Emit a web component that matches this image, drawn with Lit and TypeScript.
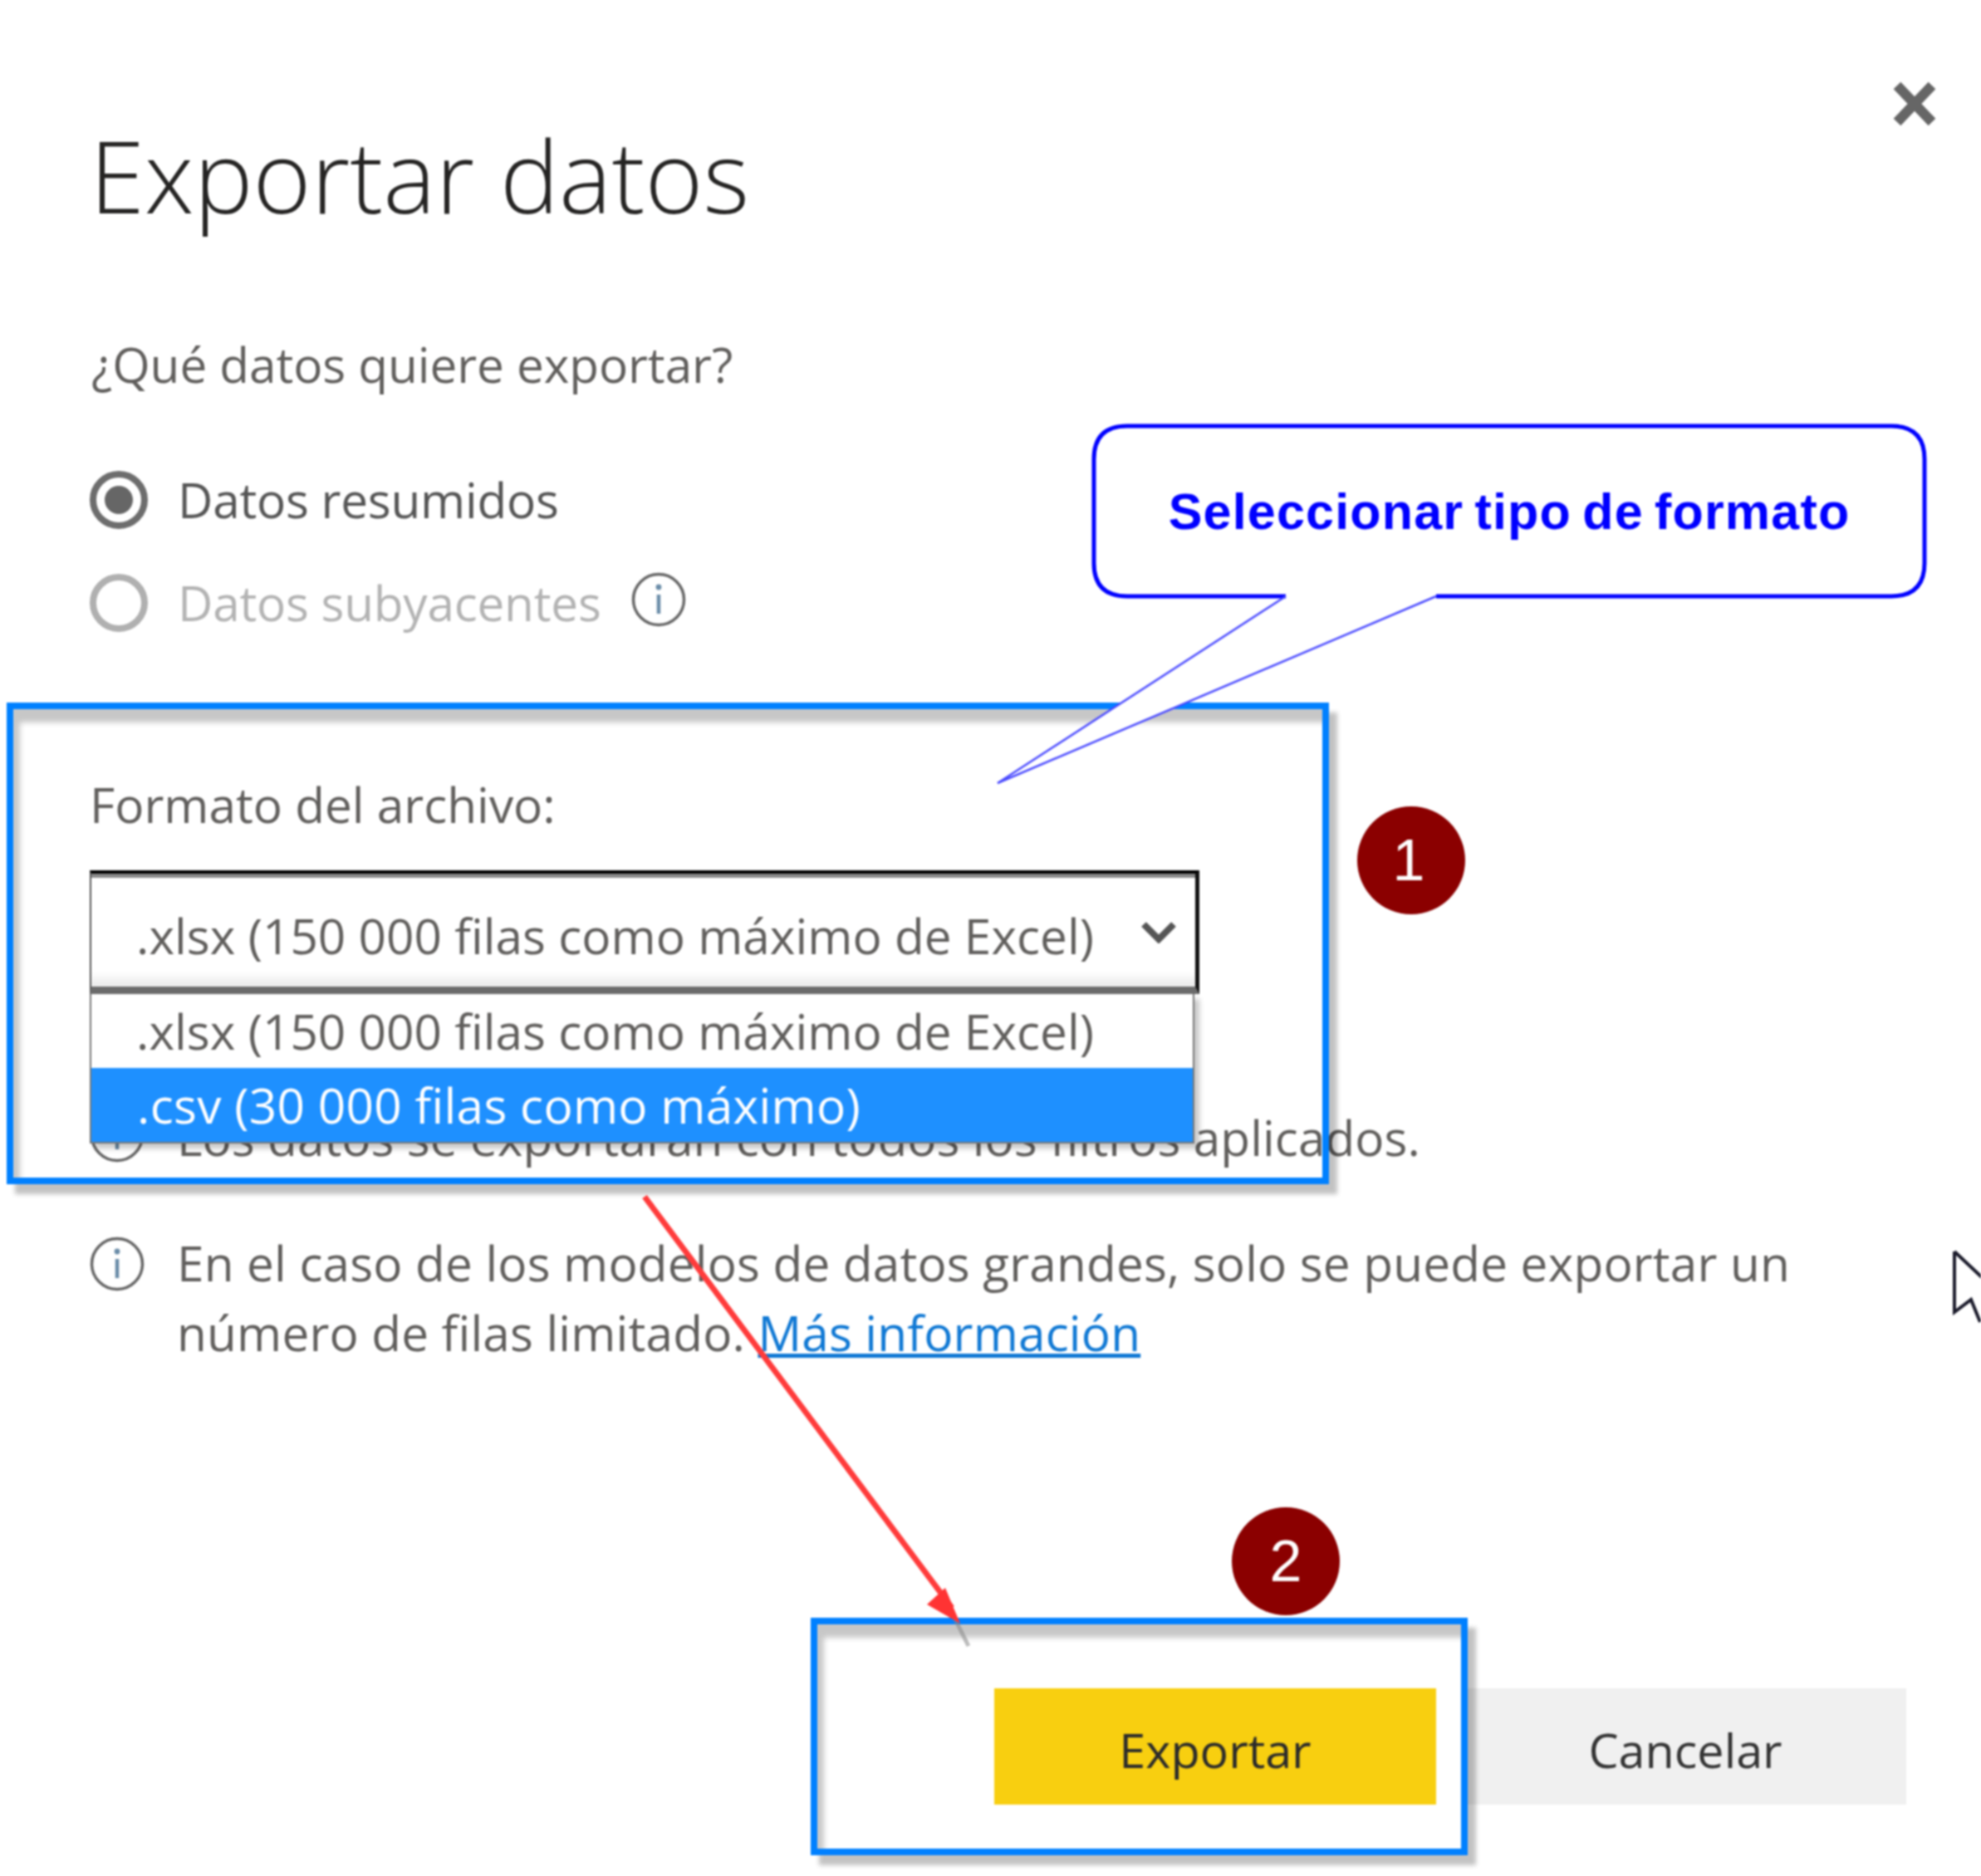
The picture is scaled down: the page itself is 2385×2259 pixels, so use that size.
import { LitElement, html, css, svg } from "lit";
import { customElement } from "lit/decorators.js";

const infoIcon = (size: number) => html`<svg class="info" width=${size} height=${size} viewBox="0 0 66 66" aria-hidden="true">
  <circle cx="33" cy="33" r="30.5" fill="none" stroke="#666" stroke-width="3.5"/>
  <circle cx="33" cy="18" r="3.4" fill="#6a8ca8"/>
  <path d="M33 27V50" stroke="#6a8ca8" stroke-width="4.5" fill="none"/>
</svg>`;

@customElement("app-root")
export class AppRoot extends LitElement {
  static styles = css`
    :host {
      display: block;
      position: relative;
      width: 2385px;
      height: 2259px;
      overflow: hidden;
      background: #fff;
      font-family: "Open Sans", "Noto Sans", sans-serif;
      color: #605e5c;
      font-size: 58.5px;
      filter: blur(0.8px);
    }
    .dialog {
      display: flex;
      flex-direction: column;
      padding: 0 90px 0 108px;
      height: 2259px;
      box-sizing: border-box;
    }
    .head {
      display: flex;
      justify-content: space-between;
      height: 293px;
      padding-top: 131px;
      box-sizing: border-box;
    }
    h1 {
      margin: 0;
      font-size: 119.5px;
      line-height: 160px;
      font-weight: 300;
      color: #252423;
      white-space: nowrap;
    }
    .close {
      margin: -34px -37px 0 0;
      width: 54px;
      height: 56px;
    }
    .line {
      height: 70px;
      line-height: 70px;
      white-space: nowrap;
    }
    .q { margin-top: 110px; padding-left: 2px; letter-spacing: -0.08px; }
    .radio {
      display: flex;
      align-items: center;
      gap: 36px;
      height: 70px;
      color: #555;
      white-space: nowrap;
      letter-spacing: -0.25px;
    }
    .r1 { margin-top: 93px; }
    .r2 { margin-top: 54px; color: #b3b3b3; }
    .dot {
      width: 70px;
      height: 70px;
      border-radius: 50%;
      border: 8px solid #6d6d6d;
      box-sizing: border-box;
      display: flex;
      align-items: center;
      justify-content: center;
      flex: none;
      margin-top: 2px;
    }
    .dot i {
      width: 34px;
      height: 34px;
      border-radius: 50%;
      background: #666;
    }
    .r2 .dot { border-color: #b0b0b0; }
    .r2 .info { margin: -6px 0 0 0; }
    .label { margin-top: 173px; }
    .selectwrap {
      position: relative;
      margin-top: 45px;
      width: 1336px;
    }
    .select {
      height: 149px;
      box-sizing: border-box;
      border-style: solid;
      border-color: #000 #111 #6b6b6b #555;
      border-width: 4px 5px 9px 2px;
      box-shadow: inset 0 5px 0 #8a8a8a, inset 0 -18px 12px -8px #ececec;
      display: flex;
      align-items: center;
      justify-content: space-between;
      padding: 12px 22px 0 54px;
      white-space: nowrap;
      letter-spacing: 0.03px;
    }
    .select svg { margin-top: -9px; }
    .menu {
      position: absolute;
      top: 149px;
      left: 0;
      width: 1330px;
      box-sizing: border-box;
      border: 2px solid #777;
      border-top: none;
      background: #fff;
      box-shadow: 6px 6px 6px rgba(0, 0, 0, 0.22);
    }
    .opt {
      height: 89px;
      line-height: 89px;
      padding-left: 54px;
      white-space: nowrap;
      letter-spacing: 0.03px;
    }
    .opt.on {
      background: #1e90ff;
      color: #fff;
      padding-left: 55px;
      letter-spacing: 0.3px;
    }
    .note {
      display: flex;
      gap: 39px;
      align-items: flex-start;
    }
    .n1 { margin-top: 137px; height: 70px; line-height: 70px; white-space: nowrap; letter-spacing: 0.06px; }
    .n2 { margin-top: 74px; line-height: 84px; letter-spacing: 0.17px; }
    .n2 .info { margin-top: 11px; flex: none; }
    .n1 .info { flex: none; }
    a { color: #0f78d4; text-decoration: underline; }
    .foot {
      margin-top: 387px;
      display: flex;
      justify-content: flex-end;
      gap: 34px;
    }
    .btn {
      width: 532px;
      height: 140px;
      display: flex;
      align-items: center;
      justify-content: center;
      padding-top: 8px;
      color: #2b2b2b;
      box-sizing: border-box;
      font-size: 57.5px;
    }
    .export { background: #f8cf10; }
    .cancel { background: #f0f0f0; color: #333; }

    .mark {
      position: absolute;
      border: 8px solid #0080ff;
      box-sizing: border-box;
      box-shadow:
        10px 12px 5px rgba(0, 0, 0, 0.24),
        inset 8px 16px 6px rgba(0, 0, 0, 0.22);
    }
    .m1 { left: 8px; top: 846px; width: 1592px; height: 580px; }
    .m2 { left: 976px; top: 1948px; width: 791px; height: 286px; }
    .badge {
      position: absolute;
      width: 130px;
      height: 130px;
      border-radius: 50%;
      background: #8b0000;
      color: #fff;
      display: flex;
      align-items: center;
      justify-content: center;
      font-size: 70px;
      font-family: "Liberation Sans", sans-serif;
    }
    .b1 { left: 1634px; top: 971px; padding-right: 6px; box-sizing: border-box; }
    .b2 { left: 1483px; top: 1815px; }
    .over {
      position: absolute;
      left: 0;
      top: 0;
      pointer-events: none;
    }
    .tip {
      position: absolute;
      left: 1317px;
      top: 513px;
      width: 1000px;
      height: 205px;
      display: flex;
      align-items: center;
      justify-content: center;
      color: #0000ff;
      font: bold 61px "Liberation Sans", sans-serif;
      letter-spacing: 1.2px;
      word-spacing: -5px;
      white-space: nowrap;
    }
  `;

  render() {
    const chevron = html`<svg width="44" height="28" viewBox="0 0 44 28" aria-hidden="true"><path d="M4 5L22 23L40 5" fill="none" stroke="#555" stroke-width="8"/></svg>`;
    return html`
      <div class="dialog">
        <div class="head">
          <h1>Exportar datos</h1>
          <svg class="close" viewBox="0 0 54 56" aria-hidden="true"><path d="M6 6L48 50M48 6L6 50" stroke="#666" stroke-width="12" fill="none"/></svg>
        </div>
        <div class="line q">¿Qué datos quiere exportar?</div>
        <div class="radio r1"><span class="dot"><i></i></span>Datos resumidos</div>
        <div class="radio r2"><span class="dot"></span>Datos subyacentes ${infoIcon(66)}</div>
        <div class="line label">Formato del archivo:</div>
        <div class="selectwrap">
          <div class="select"><span>.xlsx (150 000 filas como máximo de Excel)</span>${chevron}</div>
          <div class="menu">
            <div class="opt">.xlsx (150 000 filas como máximo de Excel)</div>
            <div class="opt on">.csv (30 000 filas como máximo)</div>
          </div>
        </div>
        <div class="note n1">${infoIcon(66)}<span>Los datos se exportarán con todos los filtros aplicados.</span></div>
        <div class="note n2">${infoIcon(66)}<span>En el caso de los modelos de datos grandes, solo se puede exportar un número de filas limitado. <a href="#">Más información</a></span></div>
        <div class="foot">
          <div class="btn export">Exportar</div>
          <div class="btn cancel">Cancelar</div>
        </div>
      </div>

      <div class="mark m1"></div>
      <div class="mark m2"></div>
      <div class="badge b1">1</div>
      <div class="badge b2">2</div>

      <svg class="over" width="2385" height="2259" viewBox="0 0 2385 2259" aria-hidden="true">
        ${svg`
          <path d="M1166 1982L1150 1950" stroke="#888" stroke-width="5" opacity=".55"/>
          <path d="M776 1441L1146 1936" stroke="#ff3b3b" stroke-width="7" fill="none"/>
          <path d="M1156 1955L1116 1932L1138 1912Z" fill="#ff3333"/>
          <path d="M1357 513H2277Q2317 513 2317 553V678Q2317 718 2277 718H1729L1201 943L1548 718H1357Q1317 718 1317 678V553Q1317 513 1357 513Z" fill="#fff"/>
          <path d="M1548 718H1357Q1317 718 1317 678V553Q1317 513 1357 513H2277Q2317 513 2317 553V678Q2317 718 2277 718H1729" fill="none" stroke="#0000ff" stroke-width="5"/>
          <path d="M1729 718L1201 943L1548 718" fill="none" stroke="#4a4aff" stroke-width="2.5"/>
          <path d="M2353 1507V1580L2373 1565L2384 1592M2353 1507L2386 1538" fill="none" stroke="#1a1a2a" stroke-width="4"/>
        `}
      </svg>
      <div class="tip">Seleccionar tipo de formato</div>
    `;
  }
}
